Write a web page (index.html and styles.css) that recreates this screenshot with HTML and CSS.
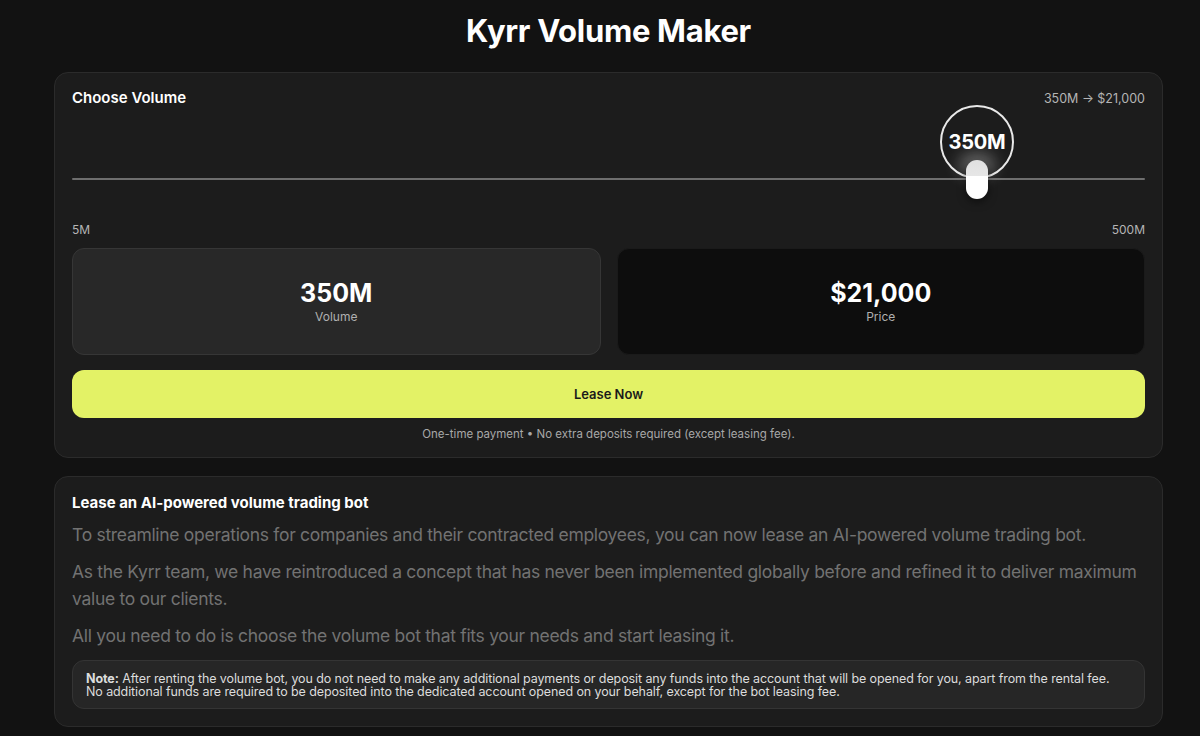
FILE: index.html
```html
<!DOCTYPE html>
<html>
<head>
<meta charset="utf-8">
<link rel="stylesheet" href="styles.css">
</head>
<body>
<div class="page">
  <h1 class="title">Kyrr Volume Maker</h1>
  <section class="card">
    <div class="card-head">
      <div class="card-title">Choose Volume</div>
      <div class="summary">350M → $21,000</div>
    </div>
    <div class="slider">
      <div class="track"></div>
      <div class="thumb-wrap" style="left: 84.34%;">
        <div class="bubble">350M</div>
        <div class="glow"></div>
        <div class="thumb"></div>
      </div>
    </div>
    <div class="range-labels"><span>5M</span><span>500M</span></div>
    <div class="stats">
      <div class="stat stat-vol">
        <div class="stat-value">350M</div>
        <div class="stat-label">Volume</div>
      </div>
      <div class="stat stat-price">
        <div class="stat-value">$21,000</div>
        <div class="stat-label">Price</div>
      </div>
    </div>
    <button class="lease">Lease Now</button>
    <div class="footnote">One-time payment • No extra deposits required (except leasing fee).</div>
  </section>
  <section class="card info">
    <h2 class="info-title">Lease an AI-powered volume trading bot</h2>
    <p class="para">To streamline operations for companies and their contracted employees, you can now lease an AI-powered volume trading bot.</p>
    <p class="para">As the Kyrr team, we have reintroduced a concept that has never been implemented globally before and refined it to deliver maximum value to our clients.</p>
    <p class="para">All you need to do is choose the volume bot that fits your needs and start leasing it.</p>
    <div class="note"><b>Note:</b> After renting the volume bot, you do not need to make any additional payments or deposit any funds into the account that will be opened for you, apart from the rental fee.<br>No additional funds are required to be deposited into the dedicated account opened on your behalf, except for the bot leasing fee.</div>
  </section>
</div>
</body>
</html>
```

FILE: styles.css
```css
* { box-sizing: border-box; }
html, body { margin: 0; padding: 0; }
body {
  background: #121212;
  color: #fff;
  font-family: Inter, "Noto Sans", sans-serif;
  width: 1200px;
  height: 736px;
  overflow: hidden;
}
.page {
  width: 1109px;
  margin-left: 54px;
  padding-top: 12px;
  display: flex;
  flex-direction: column;
}
.title {
  margin: 0 0 22px;
  text-align: center;
  font-size: 31px;
  line-height: 38px;
  font-weight: 700;
  letter-spacing: -0.3px;
}
.card {
  background: #1c1c1c;
  border: 1px solid #2b2b2b;
  border-radius: 14px;
  padding: 15px 17px 15px;
}
.card-head {
  display: flex;
  justify-content: space-between;
  align-items: center;
}
.card-title {
  font-size: 15px;
  font-weight: 600;
  line-height: 20px;
}
.summary {
  font-size: 12.5px;
  color: #b5b5b5;
}
.slider {
  position: relative;
  height: 114px;
}
.track {
  position: absolute;
  left: 0; right: 0;
  top: 70px;
  height: 2px;
  background: #6e6e6e;
  border-radius: 1px;
}
.thumb-wrap {
  position: absolute;
  top: 0;
  width: 0;
  height: 0;
}
.bubble {
  position: absolute;
  left: -37px;
  top: -3px;
  width: 74px;
  height: 74px;
  border-radius: 50%;
  border: 2px solid #e8e8e8;
  display: flex;
  align-items: center;
  justify-content: center;
  font-size: 20px;
  font-weight: 700;
  letter-spacing: -0.2px;
}
.glow {
  position: absolute;
  left: -18px;
  top: 45px;
  width: 36px;
  height: 24px;
  border-radius: 50%;
  background: rgba(255,255,255,0.35);
  filter: blur(8px);
}
.thumb {
  position: absolute;
  left: -11px;
  top: 52px;
  width: 22px;
  height: 39px;
  border-radius: 11px;
  background: linear-gradient(#e0e0e0 0%, #e6e6e6 40%, #ffffff 41%, #ffffff 100%);
  box-shadow: 0 3px 8px rgba(0,0,0,0.5);
}
.range-labels {
  display: flex;
  justify-content: space-between;
  font-size: 12px;
  color: #b5b5b5;
  line-height: 16px;
}
.stats {
  display: grid;
  grid-template-columns: 1fr 1fr;
  gap: 16px;
  margin-top: 10px;
}
.stat {
  height: 107px;
  border-radius: 12px;
  display: flex;
  flex-direction: column;
  align-items: center;
  justify-content: center;
}
.stat-vol {
  background: #282828;
  border: 1px solid #363636;
}
.stat-price {
  background: #0d0d0d;
  border: 1px solid #1a1a1a;
}
.stat-value {
  font-size: 25px;
  font-weight: 700;
  line-height: 30px;
  margin-top: -1px;
}
.stat-label {
  font-size: 12px;
  color: #b0b0b0;
  margin-top: 1px;
}
.lease {
  margin-top: 15px;
  height: 48px;
  border: none;
  border-radius: 12px;
  background: #e3f266;
  color: #1a1a1a;
  font-family: inherit;
  font-size: 13px;
  font-weight: 600;
  width: 100%;
}
.footnote {
  margin-top: 8px;
  text-align: center;
  font-size: 11.5px;
  color: #a8a8a8;
  line-height: 16px;
}
.info {
  margin-top: 18px;
  padding-top: 16px;
  padding-bottom: 17px;
}
.info-title {
  margin: 0 0 8px;
  font-size: 15px;
  font-weight: 700;
  line-height: 20px;
}
.para {
  margin: 0 0 10px;
  font-size: 17.5px;
  letter-spacing: -0.3px;
  line-height: 27px;
  color: #727272;
  font-weight: 400;
}
.note {
  margin-top: 11px;
  background: #262626;
  border: 1px solid #343434;
  border-radius: 12px;
  padding: 11px 13px 10px;
  font-size: 12.5px;
  letter-spacing: -0.1px;
  line-height: 13px;
  color: #dcdcdc;
}
.note b { font-weight: 700; }
```
